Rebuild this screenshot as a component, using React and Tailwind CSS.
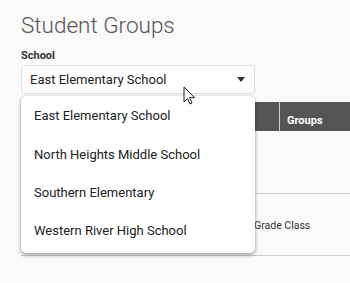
import React from 'react';

const schools = [
  'East Elementary School',
  'North Heights Middle School',
  'Southern Elementary',
  'Western River High School',
];

const App = () => {
  return (
    <div className="w-[350px] h-[283px] overflow-hidden bg-[#fafafa] font-['Roboto',sans-serif] relative">
      <div className="pl-[21px] pt-[10px]">
        {/* Title */}
        <h1 className="text-[22.5px] leading-[30px] font-light text-[#555]">Student Groups</h1>

        {/* School select */}
        <div className="mt-[9px] text-[11px] leading-[14px] font-bold text-[#333]">School</div>
        <div className="relative mt-[2px] w-[234px] z-10">
          <div className="h-[29px] bg-white border border-[#ddd] rounded-[3px] flex items-center pl-[8px] pr-[9px]">
            <span className="flex-1 text-[13px] text-[#222]">East Elementary School</span>
            <span className="w-0 h-0 border-l-[4px] border-r-[4px] border-t-[5px] border-l-transparent border-r-transparent border-t-[#333]" />
          </div>

          {/* Open menu */}
          <div className="absolute left-0 top-full mt-[2px] w-[234px] bg-white rounded-[5px] shadow-[0_2px_4px_rgba(0,0,0,0.35),0_0_2px_rgba(0,0,0,0.15)] pt-[1px] pb-[3px]">
            {schools.map((s) => (
              <div key={s} className="h-[38.3px] flex items-center pl-[13px] text-[13px] text-[#222]">
                {s}
              </div>
            ))}
          </div>
        </div>

        {/* Table behind menu */}
        <div className="mt-[8px]">
          <div className="h-[29px] bg-[#555] flex">
            <div className="w-[259px] border-r border-[#ccc]" />
            <div className="flex-1 flex items-center pl-[7px] pt-[10px] text-[11px] font-bold text-white">Groups</div>
          </div>
          <div className="h-[63px] border-b border-[#ccc]" />
          <div className="h-[62px] border-b border-[#ccc] flex items-center">
            <span className="ml-[233px] mt-[2px] text-[10.5px] text-[#333]">Grade Class</span>
          </div>
        </div>
      </div>

      {/* Mouse cursor */}
      <svg className="absolute left-[183px] top-[86px] z-20" width="14" height="20" viewBox="0 0 14 20">
        <path d="M1 1 L1 16 L4.5 12.5 L7 18 L9 17 L6.6 11.6 L11.5 11.6 Z" fill="white" stroke="#222" strokeWidth="1" strokeLinejoin="round" />
      </svg>
    </div>
  );
};

export default App;
